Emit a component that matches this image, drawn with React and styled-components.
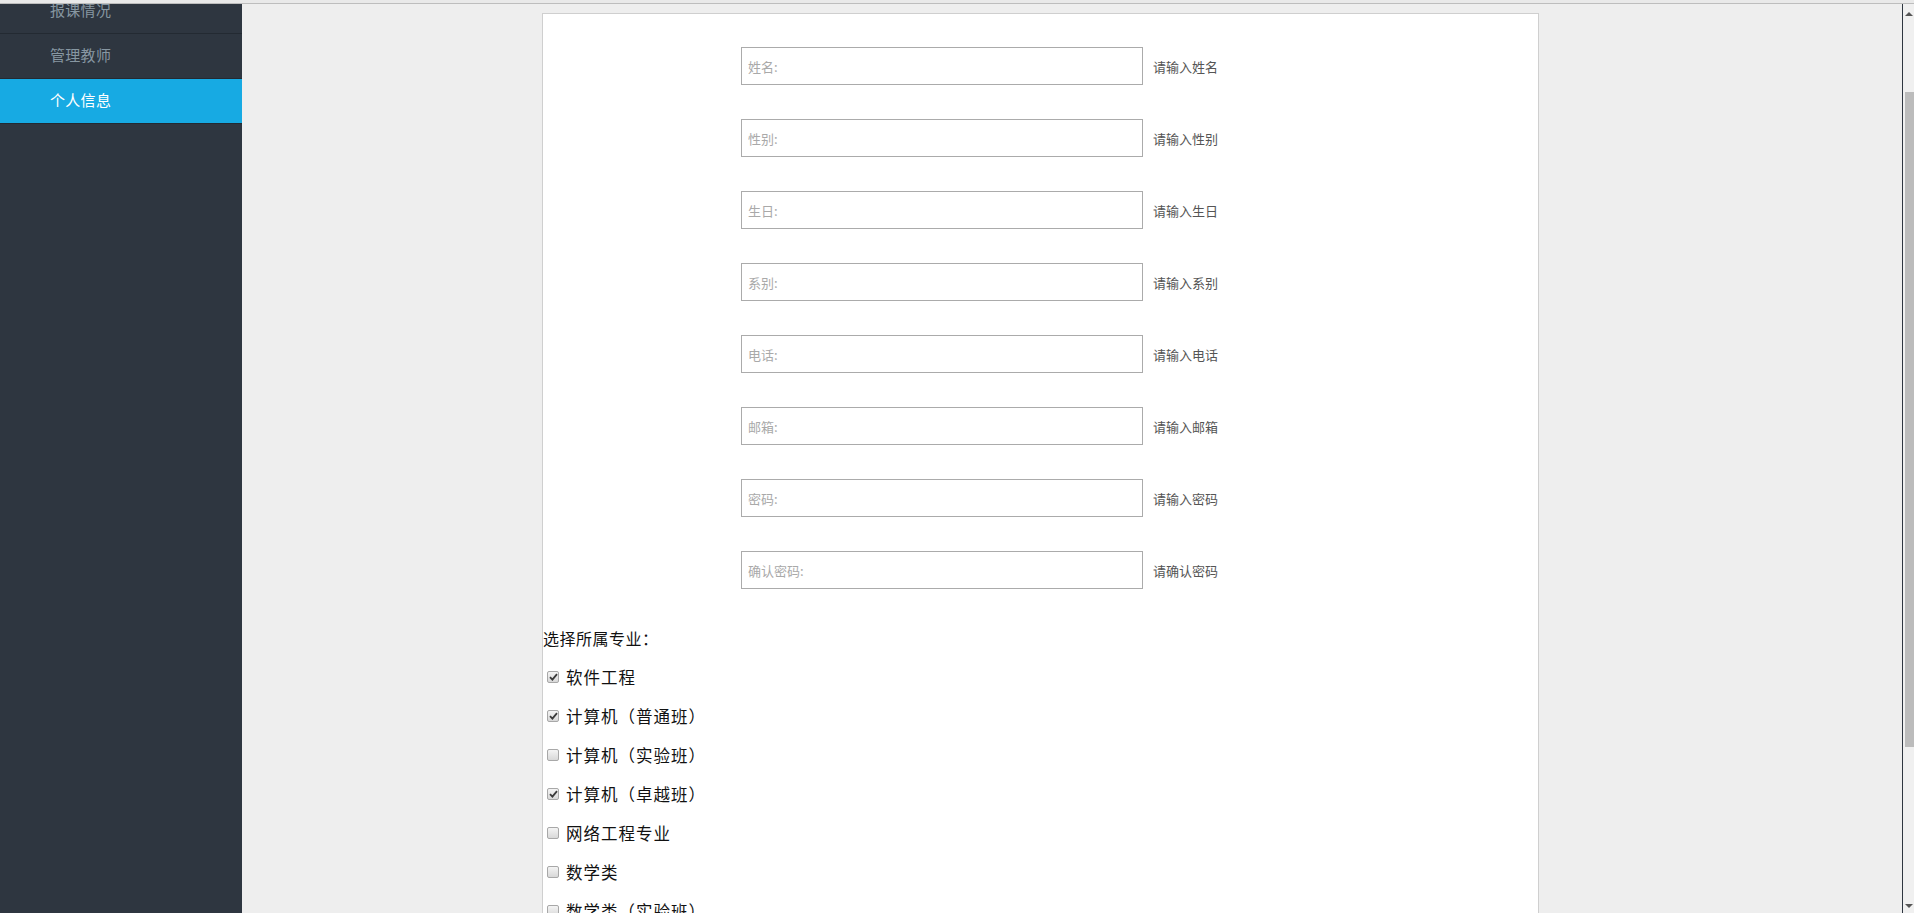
import React from "react";
import styled, { createGlobalStyle } from "styled-components";

const Global = createGlobalStyle`
  html, body { margin: 0; padding: 0; height: 100%; overflow: hidden; }
  body { font-family: "Noto Sans CJK SC", "Noto Sans", "Liberation Sans", sans-serif; }
  #root { height: 100%; }
  * { box-sizing: border-box; }
`;

const Frame = styled.div`
  height: 100vh;
  display: flex;
  flex-direction: column;
`;

const TopStrip = styled.div`
  height: 4px;
  flex: none;
  background: #e9e9e9;
  border-bottom: 1px solid #bdbdbd;
`;

const Body = styled.div`
  flex: 1;
  min-height: 0;
  display: flex;
  overflow: hidden;
`;

const Sidebar = styled.nav`
  width: 242px;
  flex: none;
  background: #2e3640;
  overflow: hidden;
`;

const Menu = styled.ul`
  list-style: none;
  margin: -15px 0 0;
  padding: 0;
`;

const MenuItem = styled.li`
  height: 45px;
  display: flex;
  align-items: center;
  padding: 0 0 3px 50px;
  font-size: 15px;
  letter-spacing: 0.3px;
  color: ${(p) => (p.$active ? "#ffffff" : "#8797a2")};
  background: ${(p) => (p.$active ? "#17aae3" : "transparent")};
  border-bottom: 1px solid #232a32;
`;

const Main = styled.main`
  flex: 1;
  min-width: 0;
  background: #eeeeee;
  border-right: 1px solid #2e3640;
  overflow: hidden;
  padding: 9px 0 0 300px;
`;

const Card = styled.section`
  width: 997px;
  min-height: 1200px;
  background: #ffffff;
  border: 1px solid #cfcfcf;
  padding-top: 33px;
`;

const Fields = styled.div`
  display: flex;
  flex-direction: column;
  gap: 34px;
  padding-left: 198px;
`;

const FieldRow = styled.div`
  display: flex;
  align-items: center;
  gap: 10px;
`;

const TextInput = styled.input`
  width: 402px;
  height: 38px;
  border: 1px solid #ababab;
  border-radius: 0;
  padding: 0 6px;
  font-family: inherit;
  font-size: 13px;
  color: #333;
  outline: none;
  &::placeholder { color: #a9a9a9; }
`;

const Hint = styled.span`
  font-size: 13px;
  color: #555555;
`;

const Majors = styled.div`
  margin-top: 30px;
  display: flex;
  flex-direction: column;
`;

const MajorsTitle = styled.div`
  height: 38px;
  line-height: 38px;
  font-size: 16px;
  letter-spacing: 0.5px;
  color: #111;
`;

const Option = styled.label`
  height: 39px;
  display: flex;
  align-items: center;
  gap: 7px;
  padding: 0 0 0 4px;
  font-size: 16.5px;
  letter-spacing: 1px;
  color: #111;
`;

const Box = styled.span`
  width: 12px;
  height: 12px;
  flex: none;
  border: 1px solid #a8a8a8;
  border-radius: 2px;
  background: linear-gradient(#f4f4f4, #d8d8d8);
  display: flex;
  align-items: center;
  justify-content: center;
`;

const Scrollbar = styled.div`
  width: 11px;
  flex: none;
  background: #f0f0f0;
  position: relative;
`;

const Arrow = styled.span`
  position: absolute;
  left: 2px;
  width: 0;
  height: 0;
  border-left: 4px solid transparent;
  border-right: 4px solid transparent;
  ${(p) =>
    p.$down
      ? "bottom: 5px; border-top: 4px solid #555;"
      : "top: 8px; border-bottom: 4px solid #555;"}
`;

const Thumb = styled.span`
  position: absolute;
  left: 2px;
  right: 0;
  top: 88px;
  height: 655px;
  background: #bcbcbc;
`;

const fields = [
  ["姓名:", "请输入姓名"],
  ["性别:", "请输入性别"],
  ["生日:", "请输入生日"],
  ["系别:", "请输入系别"],
  ["电话:", "请输入电话"],
  ["邮箱:", "请输入邮箱"],
  ["密码:", "请输入密码"],
  ["确认密码:", "请确认密码"],
];

const majors = [
  ["软件工程", true],
  ["计算机（普通班）", true],
  ["计算机（实验班）", false],
  ["计算机（卓越班）", true],
  ["网络工程专业", false],
  ["数学类", false],
  ["数学类（实验班）", false],
];

function Check({ on }) {
  return (
    <Box>
      {on && (
        <svg width="9" height="8" viewBox="0 0 9 8">
          <path d="M1 4.2 L3.4 6.6 L8 1.2" fill="none" stroke="#3a3a3a" strokeWidth="1.8" />
        </svg>
      )}
    </Box>
  );
}

export default function App() {
  return (
    <Frame>
      <Global />
      <TopStrip />
      <Body>
        <Sidebar>
          <Menu>
            <MenuItem>报课情况</MenuItem>
            <MenuItem>管理教师</MenuItem>
            <MenuItem $active>个人信息</MenuItem>
          </Menu>
        </Sidebar>
        <Main>
          <Card>
            <Fields>
              {fields.map(([ph, hint]) => (
                <FieldRow key={ph}>
                  <TextInput placeholder={ph} type={ph.includes("密码") ? "password" : "text"} />
                  <Hint>{hint}</Hint>
                </FieldRow>
              ))}
            </Fields>
            <Majors>
              <MajorsTitle>选择所属专业：</MajorsTitle>
              {majors.map(([name, on]) => (
                <Option key={name}>
                  <Check on={on} />
                  {name}
                </Option>
              ))}
            </Majors>
          </Card>
        </Main>
        <Scrollbar>
          <Arrow />
          <Thumb />
          <Arrow $down />
        </Scrollbar>
      </Body>
    </Frame>
  );
}
